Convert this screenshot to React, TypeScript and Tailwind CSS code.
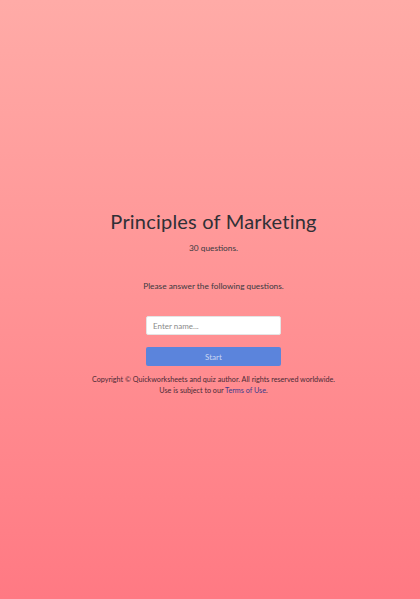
export default function App() {
  return (
    <div
      className="min-h-screen w-full flex flex-col items-center justify-center pl-[7px] pt-[6px] bg-gradient-to-b from-[#ffaba7] to-[#ff7983] text-[#3a3a40]"
      style={{ fontFamily: "Lato, 'Open Sans', sans-serif" }}
    >
      <h1 className="text-[20px] leading-[24px] text-[#303036] tracking-[0.2px]">Principles of Marketing</h1>
      <p className="mt-[9px] text-[8.3px] leading-[12px]">30 questions.</p>
      <p className="mt-[26px] text-[8.3px] leading-[12px]">Please answer the following questions.</p>
      <input
        type="text"
        placeholder="Enter name..."
        className="mt-[24px] w-[135px] h-[19px] rounded-[2px] bg-white border border-[#e4e4e4] px-[6px] text-[8px] placeholder:text-[#8a8a8a] outline-none"
      />
      <button className="mt-[12px] w-[135px] h-[19px] rounded-[2px] bg-[#5b84dc] text-[8px] text-[#c9d6f3]">
        Start
      </button>
      <div className="mt-[8px] text-[7.2px] leading-[11px] text-center text-[#4a2a35]">
        <p>Copyright © Quickworksheets and quiz author. All rights reserved worldwide.</p>
        <p>
          Use is subject to our <a className="text-[#3d3a8c]">Terms of Use</a>.
        </p>
      </div>
    </div>
  );
}
